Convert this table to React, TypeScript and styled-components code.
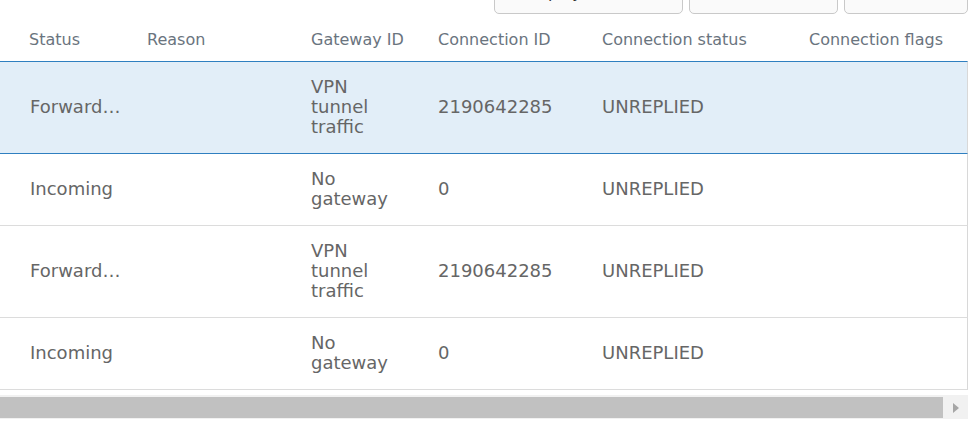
import React from "react";
import styled, { createGlobalStyle } from "styled-components";

const GlobalStyle = createGlobalStyle`
  html, body {
    margin: 0;
    padding: 0;
    background: #ffffff;
    overflow: hidden;
  }
  body {
    font-family: "DejaVu Sans", "Liberation Sans", sans-serif;
  }
`;

const COLS = "132px 164px 127px 164px 207px 1fr";

const Page = styled.div`
  width: 968px;
  display: flex;
  flex-direction: column;
`;

const Toolbar = styled.div`
  display: flex;
  justify-content: flex-end;
  gap: 6px;
  height: 36px;
  margin-top: -22px;
`;

const ToolButton = styled.button<{ $w: number }>`
  width: ${(p) => p.$w}px;
  height: 36px;
  box-sizing: border-box;
  display: flex;
  align-items: flex-start;
  justify-content: center;
  padding: 6px 0 0;
  border: 1px solid #c9c9c9;
  border-radius: 5px;
  background: #fafafa;
  color: #333333;
  font: 16px "DejaVu Sans", sans-serif;
  line-height: 16px;
`;

const HeaderRow = styled.div`
  display: grid;
  grid-template-columns: ${COLS};
  align-items: center;
  height: 44px;
  margin-top: 3px;
`;

const HeaderCell = styled.div<{ $first?: boolean }>`
  padding-left: ${(p) => (p.$first ? 29 : 15)}px;
  font-size: 16px;
  color: #6a747e;
  white-space: nowrap;
`;

const Row = styled.div<{ $selected?: boolean }>`
  display: grid;
  grid-template-columns: ${COLS};
  align-items: center;
  padding: 15px 0 16px;
  border-right: 1px solid #d8d8d8;
  border-top: ${(p) => (p.$selected ? "1px solid #2f7fc0" : "none")};
  border-bottom: 1px solid ${(p) => (p.$selected ? "#2f7fc0" : "#dcdcdc")};
  background: ${(p) => (p.$selected ? "#e2eef8" : "#ffffff")};
`;

const Cell = styled.div<{ $first?: boolean; $wrap?: boolean }>`
  padding-left: ${(p) => (p.$first ? 30 : 15)}px;
  padding-right: ${(p) => (p.$wrap ? 22 : 8)}px;
  font-size: 18px;
  line-height: 20px;
  color: #666666;
  white-space: ${(p) => (p.$wrap ? "normal" : "nowrap")};
  overflow: hidden;
`;

const ScrollTrack = styled.div`
  display: flex;
  align-items: stretch;
  box-sizing: border-box;
  height: 24px;
  margin-top: 5px;
  padding: 2px 0 1px;
  background: #f1f1f1;
`;

const ScrollThumb = styled.div`
  width: 943px;
  background: #c1c1c1;
`;

const ScrollArrow = styled.div`
  flex: 1;
  display: flex;
  align-items: center;
  justify-content: center;

  &::after {
    content: "";
    width: 0;
    height: 0;
    border-left: 6px solid #a6a6a6;
    border-top: 5px solid transparent;
    border-bottom: 5px solid transparent;
  }
`;

type Conn = {
  status: string;
  reason: string;
  gateway: string;
  connId: string;
  connStatus: string;
  flags: string;
  selected?: boolean;
};

const rows: Conn[] = [
  { status: "Forward…", reason: "", gateway: "VPN tunnel traffic", connId: "2190642285", connStatus: "UNREPLIED", flags: "", selected: true },
  { status: "Incoming", reason: "", gateway: "No gateway", connId: "0", connStatus: "UNREPLIED", flags: "" },
  { status: "Forward…", reason: "", gateway: "VPN tunnel traffic", connId: "2190642285", connStatus: "UNREPLIED", flags: "" },
  { status: "Incoming", reason: "", gateway: "No gateway", connId: "0", connStatus: "UNREPLIED", flags: "" },
];

const headers = ["Status", "Reason", "Gateway ID", "Connection ID", "Connection status", "Connection flags"];

export default function App() {
  return (
    <>
      <GlobalStyle />
      <Page>
        <Toolbar>
          <ToolButton $w={189}>Display columns</ToolButton>
          <ToolButton $w={149}>Reset filters</ToolButton>
          <ToolButton $w={124}>Refresh</ToolButton>
        </Toolbar>
        <HeaderRow>
          {headers.map((h, i) => (
            <HeaderCell key={h} $first={i === 0}>
              {h}
            </HeaderCell>
          ))}
        </HeaderRow>
        {rows.map((r, i) => (
          <Row key={i} $selected={r.selected}>
            <Cell $first>{r.status}</Cell>
            <Cell>{r.reason}</Cell>
            <Cell $wrap>{r.gateway}</Cell>
            <Cell>{r.connId}</Cell>
            <Cell>{r.connStatus}</Cell>
            <Cell>{r.flags}</Cell>
          </Row>
        ))}
        <ScrollTrack>
          <ScrollThumb />
          <ScrollArrow />
        </ScrollTrack>
      </Page>
    </>
  );
}
